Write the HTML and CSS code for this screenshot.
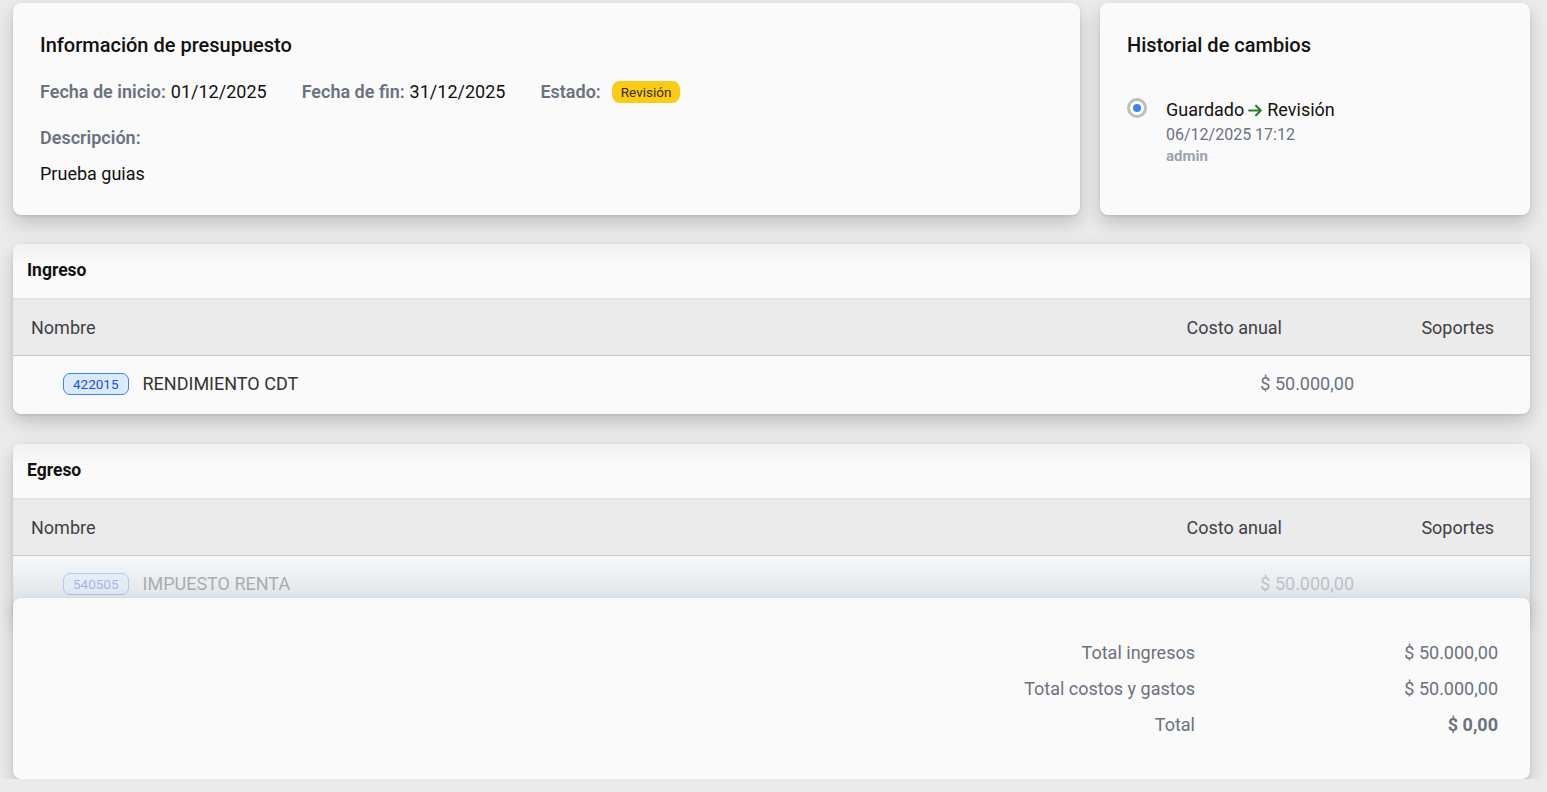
FILE: index.html
```html
<!DOCTYPE html>
<html lang="es">
<head>
<meta charset="utf-8">
<title>Presupuesto</title>
<link rel="stylesheet" href="styles.css">
</head>
<body>
<div class="page">
  <div class="top">
    <section class="card info">
      <h2 class="card-title">Información de presupuesto</h2>
      <div class="meta">
        <div class="meta-item"><span class="lbl">Fecha de inicio:</span> 01/12/2025</div>
        <div class="meta-item"><span class="lbl">Fecha de fin:</span> 31/12/2025</div>
        <div class="meta-item"><span class="lbl">Estado:</span> <span class="status">Revisión</span></div>
      </div>
      <div class="lbl desc-lbl">Descripción:</div>
      <div class="desc">Prueba guias</div>
    </section>
    <section class="card history">
      <h2 class="card-title">Historial de cambios</h2>
      <div class="hist-item">
        <span class="radio"><span class="radio-dot"></span></span>
        <div class="hist-body">
          <div class="hist-change">Guardado <svg class="arrow" viewBox="0 0 16 16" width="17" height="17"><path d="M2 8h11M8.5 3.5L13 8l-4.5 4.5" fill="none" stroke="#2e7d32" stroke-width="2" stroke-linecap="round" stroke-linejoin="round"/></svg> Revisión</div>
          <div class="hist-date">06/12/2025 17:12</div>
          <div class="hist-user">admin</div>
        </div>
      </div>
    </section>
  </div>

  <section class="card table-card ingreso">
    <div class="tc-head">Ingreso</div>
    <div class="th">
      <span class="th-name">Nombre</span>
      <span class="th-cost">Costo anual</span>
      <span class="th-sup">Soportes</span>
    </div>
    <div class="tr">
      <span class="code">422015</span>
      <span class="tr-name">RENDIMIENTO CDT</span>
      <span class="tr-cost">$ 50.000,00</span>
    </div>
  </section>

  <section class="card table-card egreso">
    <div class="tc-head">Egreso</div>
    <div class="th">
      <span class="th-name">Nombre</span>
      <span class="th-cost">Costo anual</span>
      <span class="th-sup">Soportes</span>
    </div>
    <div class="tr faded">
      <span class="code">540505</span>
      <span class="tr-name">IMPUESTO RENTA</span>
      <span class="tr-cost">$ 50.000,00</span>
    </div>
  </section>

  <section class="card totals">
    <div class="tot-row"><span class="tot-lbl">Total ingresos</span><span class="tot-val">$ 50.000,00</span></div>
    <div class="tot-row"><span class="tot-lbl">Total costos y gastos</span><span class="tot-val">$ 50.000,00</span></div>
    <div class="tot-row"><span class="tot-lbl">Total</span><span class="tot-val strong">$ 0,00</span></div>
  </section>
</div>
</body>
</html>
```

FILE: styles.css
```css
* { box-sizing: border-box; }
html, body { margin: 0; padding: 0; }
body {
  background: #ebebeb;
  font-family: Roboto, "Liberation Sans", Arial, sans-serif;
  color: #111;
  overflow: hidden;
}
.page {
  padding: 3px 17px 0 13px;
  display: flex;
  flex-direction: column;
}
.card {
  background: #fafafa;
  border-radius: 8px;
  box-shadow: 0 8px 18px rgba(0,0,0,0.18), 0 1px 3px rgba(0,0,0,0.10);
}
.top {
  display: flex;
  gap: 20px;
  height: 212px;
}
.info {
  flex: 1;
  padding: 30px 27px 0 27px;
}
.history {
  width: 430px;
  padding: 30px 27px 0 27px;
}
.card-title {
  margin: 0;
  font-size: 20px;
  font-weight: 500;
  line-height: 24px;
  color: #111;
}
.meta {
  display: flex;
  gap: 35px;
  margin-top: 23px;
  font-size: 18px;
  line-height: 24px;
}
.meta-item { display: flex; align-items: center; gap: 5px; }
.lbl { color: #6b7280; font-weight: 600; }
.status {
  margin-left: 6px;
  background: #facc15;
  color: #3a2a00;
  font-size: 13.5px;
  line-height: 22px;
  padding: 0 9px;
  border-radius: 8px;
}
.desc-lbl { margin-top: 22px; font-size: 18px; line-height: 24px; }
.desc { margin-top: 12px; font-size: 18px; line-height: 24px; }

.hist-item {
  display: flex;
  margin-top: 40px;
  gap: 19px;
}
.radio {
  width: 20px; height: 20px;
  border-radius: 50%;
  border: 3px solid #bdbdbd;
  background: #fff;
  display: flex; align-items: center; justify-content: center;
  margin-top: 1px;
  flex: none;
}
.radio-dot { width: 8px; height: 8px; border-radius: 50%; background: #3b82f6; }
.hist-change { font-size: 18px; line-height: 26px; display: flex; align-items: center; gap: 3px; }
.arrow { display: block; }
.hist-date { font-size: 16px; line-height: 24px; color: #6b7280; }
.hist-user { font-size: 15px; line-height: 18px; color: #9ca3af; font-weight: 700; }

.table-card {
  overflow: hidden;
}
.ingreso { margin-top: 29px; }
.egreso { margin-top: 30px; border-radius: 8px 8px 0 0; }
.tc-head {
  height: 56px;
  padding: 0 14px 2px;
  display: flex;
  align-items: center;
  font-size: 17.5px;
  font-weight: 700;
  border-bottom: 2px solid #e2e2e2;
  background: linear-gradient(#f2f2f2, #fafafa 45%);
}
.th {
  height: 56px;
  background: #ebebeb;
  border-bottom: 1px solid #c8c8c8;
  display: flex;
  align-items: center;
  padding: 0 36px 1px 18px;
  font-size: 18px;
  color: #3f3f46;
}
.th-name { flex: 1; }
.th-cost { width: 120px; text-align: right; }
.th-sup { width: 212px; text-align: right; }
.tr {
  height: 58px;
  display: flex;
  align-items: center;
  padding: 0 176px 3px 50px;
  font-size: 18px;
  color: #333;
}
.code {
  font-size: 13.5px;
  color: #1d4ed8;
  background: #dbeafe;
  border: 1px solid #3b82f6;
  border-radius: 7px;
  line-height: 20px;
  padding: 0 9px;
}
.tr-name { flex: 1; margin-left: 14px; }
.tr-cost { color: #6b7280; }
.tr.faded {
  background: linear-gradient(#f6f8f9, #e2e7eb 70%);
}
.tr.faded > * { opacity: 0.35; }

.totals {
  margin-top: -16px;
  position: relative;
  height: 181px;
  padding: 43px 32px 0 0;
  display: flex;
  flex-direction: column;
  align-items: flex-end;
  gap: 12px;
}
.tot-row {
  display: flex;
  font-size: 18px;
  line-height: 24px;
  color: #6b7280;
}
.tot-lbl { width: 400px; text-align: right; }
.tot-val { width: 303px; text-align: right; }
.tot-val.strong { font-weight: 700; }
```
